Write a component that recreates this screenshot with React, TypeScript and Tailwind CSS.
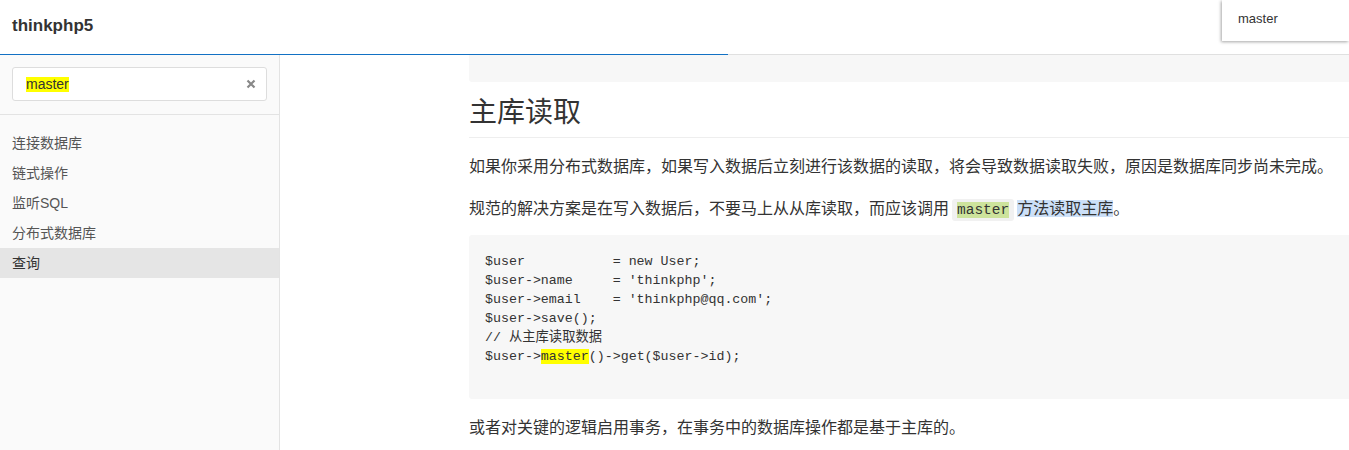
export default function App() {
  const navItems = ["连接数据库", "链式操作", "监听SQL", "分布式数据库", "查询"];
  const sans = "font-['Liberation_Sans','Noto_Sans_CJK_SC',sans-serif]";
  const mono = "font-['Liberation_Mono','Noto_Sans_CJK_SC',monospace]";

  return (
    <div className={`h-[450px] w-full overflow-hidden bg-white text-[#333] ${sans}`}>
      {/* header */}
      <header className="relative h-[55px] border-b border-[#e0e0e0] bg-white flex items-center px-3">
        <h1 className="text-[17px] font-bold text-[#333] -mt-[2px]">thinkphp5</h1>
        <div className="absolute left-0 -bottom-px h-px w-[728px] bg-[#1271c4]" />
        <div className="absolute right-0 top-0 z-10 h-[41px] w-[127px] bg-white shadow-[-1px_1px_3px_rgba(0,0,0,0.35)] pl-4 pt-[9px] text-[13px] text-[#333]">
          master
        </div>
      </header>

      <div className="flex h-[395px]">
        {/* sidebar */}
        <aside className="w-[280px] shrink-0 border-r border-[#e3e3e3] bg-[#fafafa]">
          <div className="border-b border-[#e3e3e3] px-3 pt-3 pb-[13px]">
            <div className="flex h-[34px] items-center justify-between rounded-[3px] border border-[#ddd] bg-white pl-[13px] pr-[10px]">
              <span className="bg-[#ffff00] text-[14px] leading-[15px] text-[#333]">master</span>
              <svg width="10" height="10" viewBox="0 0 10 10" className="text-[#888]">
                <path d="M1.5 1.5 L8.5 8.5 M8.5 1.5 L1.5 8.5" stroke="currentColor" strokeWidth="2.2" />
              </svg>
            </div>
          </div>
          <ul className="pt-[13px]">
            {navItems.map((item, i) => (
              <li
                key={item}
                className={`flex h-[30px] items-center pl-3 text-[14px] ${
                  i === navItems.length - 1 ? "bg-[#e5e5e5] text-[#333]" : "text-[#555]"
                }`}
              >
                {item}
              </li>
            ))}
          </ul>
        </aside>

        {/* content */}
        <main className="min-w-0 flex-1 overflow-hidden pl-[189px]">
          <div className="w-[920px]">
            <div className="h-[27px] rounded-b-[3px] bg-[#f7f7f7]" />
            <h2 className="mt-[13px] border-b border-[#eee] pb-[6px] text-[28px] leading-[36px] font-normal text-[#333]">
              主库读取
            </h2>
            <p className="mt-4 text-[16px] leading-[26px]">
              如果你采用分布式数据库，如果写入数据后立刻进行该数据的读取，将会导致数据读取失败，原因是数据库同步尚未完成。
            </p>
            <p className="mt-4 text-[16px] leading-[26px]">
              规范的解决方案是在写入数据后，不要马上从从库读取，而应该调用
              <code className={`mx-[3px] rounded-[3px] bg-[#f1f1f1] px-[5px] py-[3px] text-[14.5px] ${mono}`}>
                <span className="bg-[#cde39c]">master</span>
              </code>
              <span className="bg-[#cce0f8]">方法读取主库</span>。
            </p>
            <pre
              className={`mt-[12px] rounded-[3px] bg-[#f7f7f7] pl-4 pt-[17px] pb-[14px] text-[13.3px] leading-[19px] text-[#333] ${mono}`}
            >
              <div>{"$user           = new User;"}</div>
              <div>{"$user->name     = 'thinkphp';"}</div>
              <div>{"$user->email    = 'thinkphp@qq.com';"}</div>
              <div>{"$user->save();"}</div>
              <div>{"// 从主库读取数据"}</div>
              <div>
                {"$user->"}
                <span className="bg-[#ffff00]">master</span>
                {"()->get($user->id);"}
              </div>
              <div className="h-[19px]" />
            </pre>
            <p className="mt-4 text-[16px] leading-[26px]">
              或者对关键的逻辑启用事务，在事务中的数据库操作都是基于主库的。
            </p>
          </div>
        </main>
      </div>
    </div>
  );
}
